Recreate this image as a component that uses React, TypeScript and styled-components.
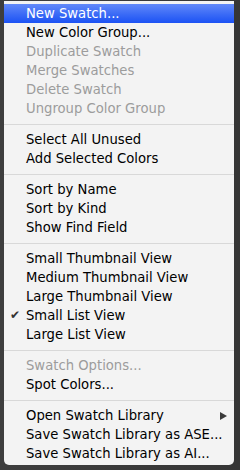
import styled, { createGlobalStyle } from "styled-components";

const GlobalStyle = createGlobalStyle`
  html, body {
    margin: 0;
    padding: 0;
    background: #3a3a3a;
  }
  body {
    width: 240px;
    height: 470px;
    overflow: hidden;
    background: linear-gradient(90deg, #3e3e3e 0%, #363636 100%);
  }
`;

const Menu = styled.ul`
  list-style: none;
  margin: 1px 0 0 4px;
  padding: 3px 0 2px;
  width: 230px;
  background: #f3f3f3;
  border-radius: 0 0 5px 5px;
  font-family: "DejaVu Sans", "Lucida Grande", sans-serif;
  font-size: 13.2px;
  box-sizing: border-box;
`;

const Item = styled.li<{ $active?: boolean; $disabled?: boolean }>`
  position: relative;
  display: flex;
  align-items: center;
  height: 19px;
  padding-left: 22px;
  padding-right: 7px;
  white-space: nowrap;
  color: ${({ $active, $disabled }) =>
    $active ? "#ffffff" : $disabled ? "#9c9c9c" : "#000000"};
  background: ${({ $active }) =>
    $active ? "linear-gradient(180deg, #6289f9 0%, #3a6af6 55%, #1c52f4 100%)" : "transparent"};
`;

const Label = styled.span`
  flex: 1;
`;

const Check = styled.span`
  position: absolute;
  left: 6px;
  top: 0;
  line-height: 19px;
  font-size: 12px;
  color: #333;
`;

const Arrow = styled.span`
  width: 0;
  height: 0;
  border-top: 4.5px solid transparent;
  border-bottom: 4.5px solid transparent;
  border-left: 7px solid #3a3a3a;
`;

const Separator = styled.li`
  height: 12px;
  display: flex;
  align-items: center;
  &::after {
    content: "";
    flex: 1;
    height: 1px;
    background: #d8d8d8;
  }
`;

type Entry =
  | { label: string; disabled?: boolean; active?: boolean; checked?: boolean; submenu?: boolean }
  | "sep";

const entries: Entry[] = [
  { label: "New Swatch...", active: true },
  { label: "New Color Group..." },
  { label: "Duplicate Swatch", disabled: true },
  { label: "Merge Swatches", disabled: true },
  { label: "Delete Swatch", disabled: true },
  { label: "Ungroup Color Group", disabled: true },
  "sep",
  { label: "Select All Unused" },
  { label: "Add Selected Colors" },
  "sep",
  { label: "Sort by Name" },
  { label: "Sort by Kind" },
  { label: "Show Find Field" },
  "sep",
  { label: "Small Thumbnail View" },
  { label: "Medium Thumbnail View" },
  { label: "Large Thumbnail View" },
  { label: "Small List View", checked: true },
  { label: "Large List View" },
  "sep",
  { label: "Swatch Options...", disabled: true },
  { label: "Spot Colors..." },
  "sep",
  { label: "Open Swatch Library", submenu: true },
  { label: "Save Swatch Library as ASE..." },
  { label: "Save Swatch Library as AI..." },
];

export default function App() {
  return (
    <>
      <GlobalStyle />
      <Menu>
        {entries.map((e, i) =>
          e === "sep" ? (
            <Separator key={i} />
          ) : (
            <Item key={i} $active={e.active} $disabled={e.disabled}>
              {e.checked && <Check>✔</Check>}
              <Label>{e.label}</Label>
              {e.submenu && <Arrow />}
            </Item>
          )
        )}
      </Menu>
    </>
  );
}
